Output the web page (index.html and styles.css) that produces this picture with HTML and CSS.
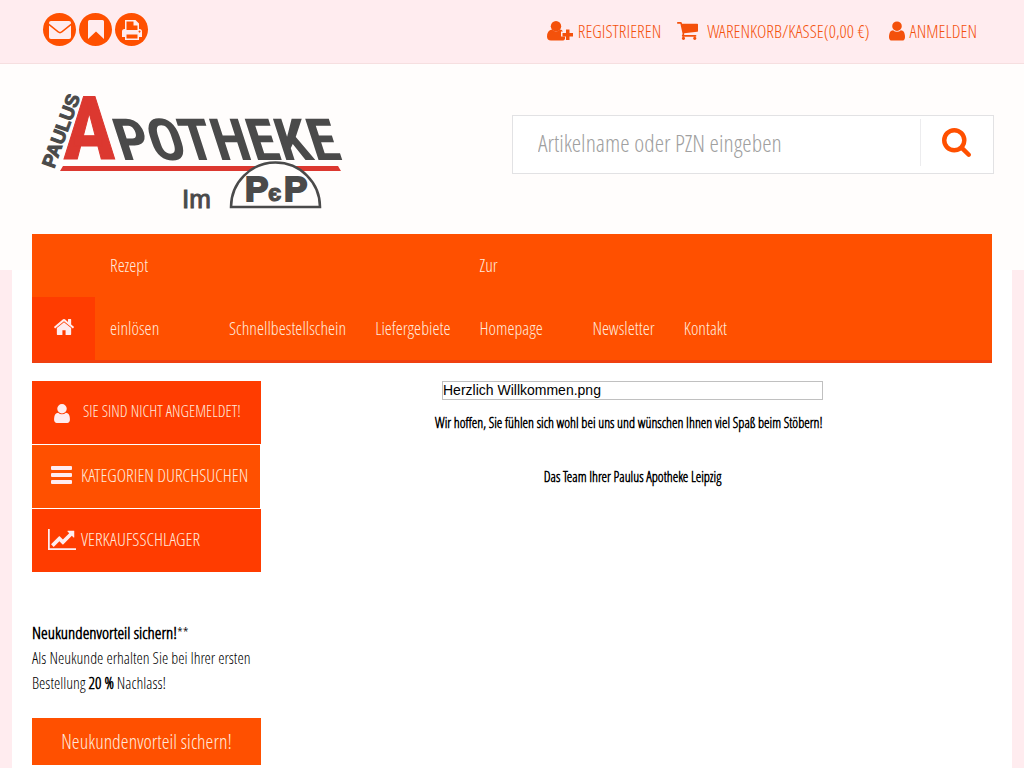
FILE: index.html
```html
<!DOCTYPE html>
<html lang="de">
<head>
    <meta charset="UTF-8">
    <meta name="viewport" content="width=device-width, initial-scale=1.0">
    <title>Paulus Apotheke im PEP</title>
    <link rel="stylesheet" href="styles.css">
</head>
<body>
    <svg class="sprite" aria-hidden="true">
        <symbol id="icon-user" viewBox="256 128 1280 1536">
            <path d="M1536 1399q0 109-62.5 187t-150.5 78h-854q-88 0-150.5-78t-62.5-187q0-85 8.5-160.5t31.5-152 58.5-131 94-89 134.5-34.5q131 128 313 128t313-128q76 0 134.5 34.5t94 89 58.5 131 31.5 152 8.5 160.5zm-256-887q0 159-112.5 271.5t-271.5 112.5-271.5-112.5-112.5-271.5 112.5-271.5 271.5-112.5 271.5 112.5 112.5 271.5z"/>
        </symbol>
    </svg>

    <div class="topbar">
        <div class="tools">
            <a href="#" aria-label="E-Mail">
                <svg width="22" height="18" viewBox="0 0 22 18"><path d="M2 0h18q2 0 2 2v.6L12.400 10.300q-1.400 1-2.800 0L0 2.600V2Q0 0 2 0zM0 4.400l8.800 7.200q2.200 1.600 4.400 0L22 4.400V16q0 2-2 2H2q-2 0-2-2z"/></svg>
            </a>
            <a href="#" aria-label="Lesezeichen">
                <svg width="16" height="19" viewBox="0 0 16 19"><path d="M1.500 0h13Q16 0 16 1.500V19l-8-7.500L0 19V1.500Q0 0 1.500 0z"/></svg>
            </a>
            <a href="#" aria-label="Drucken">
                <svg width="20" height="20" viewBox="0 0 20 20"><path fill-rule="evenodd" d="M3 0h10.500L17 3.500V9h.500Q20 9 20 11.500V17h-3v3H3v-3H0v-5.500Q0 9 2.500 9H3zM4.500 1.500V10h11V5.500h-4v-4zM4.500 14.500v4h11v-4zM17.500 10.500a1 1 0 1 0 .1 0z"/></svg>
            </a>
        </div>
        <div class="account">
            <a href="#">
                <svg width="26" height="20" viewBox="0 0 26 20"><circle cx="9" cy="5.200" r="5.200"/><path d="M5 8.500q4 4 8 0 2 0 3 2h-2v5h4v2.500q-1 1.500-2 1.500H4q-4 0-4-4 0-6 5-7z"/><path d="M19 8.500h3.500V12h3.500v3.500h-3.500V19H19v-3.500h-3.500V12H19z"/></svg>
                <span>REGISTRIEREN</span>
            </a>
            <a href="#" class="cart">
                <svg width="21" height="18" viewBox="64 256 1664 1408"><path d="M704 1536q0 52-38 90t-90 38-90-38-38-90 38-90 90-38 90 38 38 90zm896 0q0 52-38 90t-90 38-90-38-38-90 38-90 90-38 90 38 38 90zm128-1088v512q0 24-16.500 42.500t-40.500 21.500l-1044 122q13 60 13 70 0 16-24 64h920q26 0 45 19t19 45-19 45-45 19h-1024q-26 0-45-19t-19-45q0-11 8-31.500t16-36 21.500-40 15.500-29.500l-177-823h-204q-26 0-45-19t-19-45 19-45 45-19h256q16 0 28.500 6.500t19.500 15.500 13 24.500 8 26 5.500 29.500 4.500 26h1201q26 0 45 19t19 45z"/></svg>
                <span>WARENKORB/KASSE(0,00 €)</span>
            </a>
            <a href="#">
                <svg width="16" height="20"><use href="#icon-user"/></svg>
                <span>ANMELDEN</span>
            </a>
        </div>
    </div>

    <header class="header">
        <a href="#" class="logo" aria-label="Paulus Apotheke im PEP">
            <svg width="302" height="120" viewBox="0 0 302 120">
                <text class="logo-paulus" transform="translate(14 79) rotate(-70)">PAULUS</text>
                <text class="logo-a" x="23" y="69">A</text>
                <text class="logo-name" transform="translate(82 70) skewX(18)">POTHEKE</text>
                <path fill="#dc3830" d="M23 76h275l3 5H20z"/>
                <path fill="#fffdfc" stroke="#4a4a4a" stroke-width="2.500" d="M191 117a44.500 44.500 0 0 1 89 0z"/>
                <text class="logo-im" x="142" y="118">Im</text>
                <text class="logo-pep" x="205" y="111">P</text>
                <text class="logo-pep-small" x="228" y="111">є</text>
                <text class="logo-pep" x="244" y="111">P</text>
            </svg>
        </a>
        <form class="search">
            <input type="text" placeholder="Artikelname oder PZN eingeben" aria-label="Artikelname oder PZN eingeben">
            <button type="button" aria-label="Suchen">
                <svg width="29" height="29" viewBox="64 128 1664 1664"><path d="M1216 832q0-185-131.500-316.500t-316.500-131.500-316.500 131.500-131.500 316.500 131.500 316.500 316.500 131.500 316.500-131.500 131.500-316.500zm512 832q0 52-38 90t-90 38q-54 0-90-38l-343-342q-179 124-399 124-143 0-273.500-55.500t-225-150-150-225-55.500-273.500 55.500-273.500 150-225 225-150 273.500-55.500 273.500 55.500 225 150 150 225 55.500 273.500q0 220-124 399l343 343q37 37 37 90z"/></svg>
            </button>
        </form>
    </header>

    <div class="page">
        <nav class="nav">
            <a href="#" class="home" aria-label="Startseite">
                <svg width="20" height="16" viewBox="90 256 1612 1280"><path d="M1472 992v480q0 26-19 45t-45 19h-384v-384h-256v384h-384q-26 0-45-19t-19-45v-480q0-1 .5-3t.5-3l575-474 575 474q1 2 1 6zm223-69l-62 74q-8 9-21 11h-3q-13 0-21-7l-692-577-692 577q-12 8-24 7-13-2-21-11l-62-74q-8-10-7-23.500t11-21.500l719-599q32-26 76-26t76 26l244 204v-195q0-14 9-23t23-9h192q14 0 23 9t9 23v408l219 182q10 8 11 21.500t-7 23.500z"/></svg>
            </a>
            <a href="#" class="prescription">Rezept<br>einlösen</a>
            <a href="#">Schnellbestellschein</a>
            <a href="#">Liefergebiete</a>
            <a href="#" class="homepage">Zur<br>Homepage</a>
            <a href="#">Newsletter</a>
            <a href="#">Kontakt</a>
        </nav>

        <div class="columns">
            <aside class="sidebar">
                <a href="#" class="box login">
                    <svg width="28" height="19"><use href="#icon-user"/></svg>
                    <span>SIE SIND NICHT ANGEMELDET!</span>
                </a>
                <a href="#" class="box categories">
                    <svg width="28" height="18" viewBox="0 0 28 18"><rect x="3" width="21" height="4" rx="1"/><rect x="3" y="7" width="21" height="4" rx="1"/><rect x="3" y="14" width="21" height="4" rx="1"/></svg>
                    <span>KATEGORIEN DURCHSUCHEN</span>
                </a>
                <a href="#" class="box">
                    <svg width="28" height="21" viewBox="0 0 2048 1536"><path d="M2048 1408v128H0V0h128v1408zM1920 160v435q0 21-19.500 29.500T1865 617l-121-121-633 633q-10 10-23 10t-23-10l-233-233-416 416-192-192 585-585q10-10 23-10t23 10l233 233 464-464-121-121q-16-16-7.500-35.500T1453 128h435q14 0 23 9t9 23z"/></svg>
                    <span>VERKAUFSSCHLAGER</span>
                </a>
                <p class="offer"><b class="offer-title">Neukundenvorteil sichern!</b>**<br>Als Neukunde erhalten Sie bei Ihrer ersten Bestellung <b>20 %</b> Nachlass!</p>
                <a href="#" class="offer-button">Neukundenvorteil sichern!</a>
            </aside>
            <main class="content">
                <div class="welcome" role="img">Herzlich Willkommen.png</div>
                <p>Wir hoffen, Sie fühlen sich wohl bei uns und wünschen Ihnen viel Spaß beim Stöbern!&nbsp;&nbsp;</p>
                <p>Das Team Ihrer Paulus Apotheke Leipzig</p>
            </main>
        </div>
    </div>
</body>
</html>
```
FILE: styles.css
```css
* {
    box-sizing: border-box;
}
body {
    margin: 0;
    background-color: #ffecef;
    color: #000;
    font-family: "Open Sans Condensed Light", "Open Sans Condensed", "Open Sans", sans-serif;
    font-size: 16px;
    font-weight: 300;
}
a {
    text-decoration: none;
}
b {
    font-weight: bold;
}
svg {
    display: block;
    flex: none;
    fill: currentColor;
}
.sprite {
    position: absolute;
    width: 0;
    height: 0;
}

/* top bar */
.topbar {
    display: flex;
    justify-content: space-between;
    height: 64px;
    padding: 0 47px 0 43px;
    border-bottom: 1px solid #f6dfe0;
}
.tools {
    display: flex;
    gap: 3px;
    padding-top: 13px;
}
.tools a {
    display: flex;
    align-items: center;
    justify-content: center;
    width: 33px;
    height: 33px;
    border-radius: 50%;
    background-color: #ff5000;
    color: #ffecef;
}
.account {
    display: flex;
    align-items: center;
    gap: 19px;
    padding-bottom: 2px;
    font-size: 18px;
}
.account a {
    display: flex;
    align-items: center;
    gap: 5px;
    color: #f4510b;
}
.account .cart {
    gap: 9px;
    margin-left: -3px;
}

/* logo and search */
.header {
    display: flex;
    justify-content: space-between;
    align-items: flex-start;
    height: 206px;
    padding: 26px 30px 0 40px;
    background-color: #fffdfc;
}
.logo {
    color: #4a4a4a;
}
.logo svg {
    overflow: visible;
}
.logo text {
    font-family: "Liberation Sans", sans-serif;
    font-weight: bold;
}
.logo .logo-paulus {
    font-size: 19px;
    stroke: #4a4a4a;
}
.logo .logo-a {
    fill: #dc3830;
    font-family: "Roboto Condensed", "Open Sans Condensed", sans-serif;
    font-size: 88px;
    stroke: #dc3830;
}
.logo .logo-name {
    font-family: "Roboto Condensed", "Open Sans Condensed", sans-serif;
    font-size: 58px;
}
.logo .logo-im {
    font-size: 26px;
    font-weight: normal;
    stroke: #4a4a4a;
}
.logo .logo-pep {
    font-size: 35px;
    stroke: #4a4a4a;
    stroke-width: 2px;
}
.logo .logo-pep-small {
    font-size: 24px;
    stroke: #4a4a4a;
}
.search {
    display: flex;
    align-items: center;
    width: 482px;
    height: 59px;
    margin-top: 25px;
    padding-bottom: 4px;
    border: 1px solid #e2e2e4;
    background-color: #fff;
}
.search input {
    flex: 1;
    min-width: 0;
    height: 53px;
    padding: 0 25px;
    border: none;
    background: none;
    font: inherit;
    font-size: 24px;
}
.search input::placeholder {
    color: #a0a0a0;
}
.search button {
    display: flex;
    align-items: center;
    justify-content: center;
    width: 73px;
    height: 47px;
    padding: 0 2px 0 0;
    border: none;
    border-left: 1px solid #ececee;
    background: none;
    color: #ff5000;
}

/* page body */
.page {
    min-height: 534px;
    margin: -36px 12px 0;
    padding: 0 20px;
    background: linear-gradient(#fffdfc 36px, #fff 36px);
}
.nav {
    display: flex;
    align-items: flex-end;
    gap: 1px;
    border-bottom: 3px solid #f04010;
    background-color: #ff5000;
    font-size: 18px;
    line-height: 63px;
}
.nav a {
    padding: 0 14px;
    color: #ffe9dd;
}
.nav .prescription {
    min-width: 118px;
}
.nav .homepage {
    min-width: 112px;
}
.nav .home {
    display: flex;
    align-items: center;
    justify-content: center;
    width: 63px;
    height: 63px;
    padding-bottom: 3px;
    background-color: #ff3c00;
    color: #ffecef;
}
.columns {
    display: flex;
    gap: 12px;
    padding-top: 18px;
}
.sidebar {
    flex: none;
    width: 229px;
}
.box {
    display: flex;
    align-items: center;
    gap: 5px;
    height: 63px;
    margin-bottom: 1px;
    padding: 0 0 3px 16px;
    background-color: #ff3c00;
    color: #ffe9dd;
    font-size: 18px;
}
.box svg {
    color: #ffecef;
}
.login {
    gap: 7px;
    font-size: 16px;
}
.login svg {
    margin-top: 4px;
}
.categories {
    margin-right: 1px;
    background-color: #ff5000;
}
.offer {
    margin: 48px 0 22px;
    line-height: 25px;
}
.offer-title {
    font-size: 17px;
}
.offer-button {
    display: block;
    background-color: #ff5000;
    color: #ffe9dd;
    font-size: 20px;
    line-height: 47px;
    text-align: center;
}
.content {
    flex: 1;
    text-align: center;
}
.welcome {
    width: 381px;
    margin: 0 auto;
    border: 1px solid #c0c0c0;
    font-family: "Liberation Sans", sans-serif;
    font-size: 14px;
    font-weight: normal;
    line-height: 17px;
    text-align: left;
}
.content p {
    margin: 12px 0 32px;
    font-size: 14px;
    font-weight: bold;
    line-height: 22px;
}
```
